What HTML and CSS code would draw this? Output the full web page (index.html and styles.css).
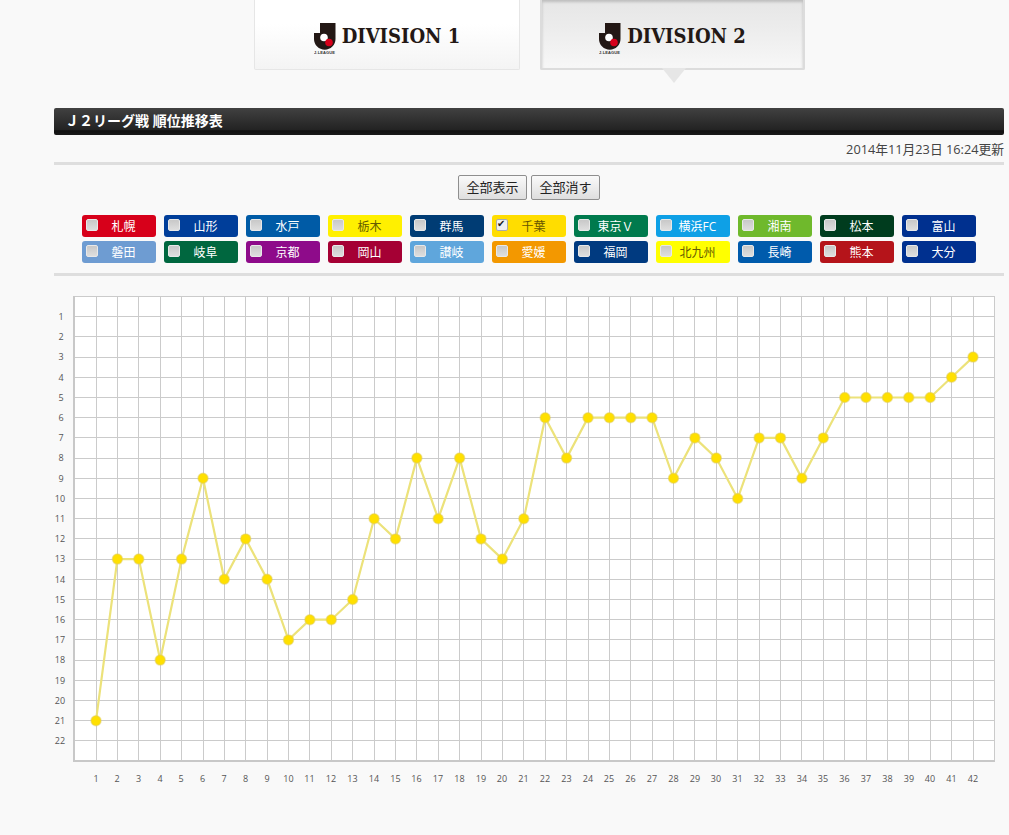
FILE: index.html
```html
<!DOCTYPE html>
<html lang="ja">
<head>
<meta charset="utf-8">
<title>J2リーグ戦 順位推移表</title>
<link rel="stylesheet" href="styles.css">
</head>
<body>
<main class="page">
  <nav class="tabs">
    <a class="tab">
      <svg class="jmark" viewBox="0 0 22 31" aria-hidden="true">
        <path class="jmark-black" d="M6 0H21.500V16A10.750 10.750 0 1 1 0 16V10H6Z"/>
        <circle class="jmark-white" cx="10" cy="14.500" r="3.800"/>
        <circle class="jmark-red" cx="15" cy="19.500" r="3.800"/>
        <text class="jmark-text" x="0" y="30.500" textLength="21">J.LEAGUE</text>
      </svg>
      <span class="division">DIVISION 1</span>
    </a>
    <a class="tab tab-active">
      <svg class="jmark" viewBox="0 0 22 31" aria-hidden="true">
        <path class="jmark-black" d="M6 0H21.500V16A10.750 10.750 0 1 1 0 16V10H6Z"/>
        <circle class="jmark-white" cx="10" cy="14.500" r="3.800"/>
        <circle class="jmark-red" cx="15" cy="19.500" r="3.800"/>
        <text class="jmark-text" x="0" y="30.500" textLength="21">J.LEAGUE</text>
      </svg>
      <span class="division">DIVISION 2</span>
    </a>
  </nav>

  <h1 class="title">Ｊ２リーグ戦 順位推移表</h1>
  <p class="updated">2014年11月23日 16:24更新</p>

  <section class="controls">
    <div class="buttons">
      <button class="btn" type="button">全部表示</button>
      <button class="btn" type="button">全部消す</button>
    </div>
    <div class="chips">
      <label class="chip c-sapporo"><input type="checkbox"><span>札幌</span></label>
      <label class="chip c-yamagata"><input type="checkbox"><span>山形</span></label>
      <label class="chip c-mito"><input type="checkbox"><span>水戸</span></label>
      <label class="chip c-tochigi"><input type="checkbox"><span>栃木</span></label>
      <label class="chip c-gunma"><input type="checkbox"><span>群馬</span></label>
      <label class="chip c-chiba"><input type="checkbox" checked><span>千葉</span></label>
      <label class="chip c-tokyov"><input type="checkbox"><span>東京Ｖ</span></label>
      <label class="chip c-yokohama"><input type="checkbox"><span>横浜FC</span></label>
      <label class="chip c-shonan"><input type="checkbox"><span>湘南</span></label>
      <label class="chip c-matsumoto"><input type="checkbox"><span>松本</span></label>
      <label class="chip c-toyama"><input type="checkbox"><span>富山</span></label>
      <label class="chip c-iwata"><input type="checkbox"><span>磐田</span></label>
      <label class="chip c-gifu"><input type="checkbox"><span>岐阜</span></label>
      <label class="chip c-kyoto"><input type="checkbox"><span>京都</span></label>
      <label class="chip c-okayama"><input type="checkbox"><span>岡山</span></label>
      <label class="chip c-sanuki"><input type="checkbox"><span>讃岐</span></label>
      <label class="chip c-ehime"><input type="checkbox"><span>愛媛</span></label>
      <label class="chip c-fukuoka"><input type="checkbox"><span>福岡</span></label>
      <label class="chip c-kitakyu"><input type="checkbox"><span>北九州</span></label>
      <label class="chip c-nagasaki"><input type="checkbox"><span>長崎</span></label>
      <label class="chip c-kumamoto"><input type="checkbox"><span>熊本</span></label>
      <label class="chip c-oita"><input type="checkbox"><span>大分</span></label>
    </div>
  </section>

  <svg class="chart" viewBox="54 286 950 510" role="img" aria-label="順位推移グラフ">
    <rect class="plot" x="74" y="296" width="920.5" height="465"/>
    <path class="grid" d="M74 316.7H994.5M74 336.9H994.5M74 357.1H994.5M74 377.3H994.5M74 397.5H994.5M74 417.7H994.5M74 437.9H994.5M74 458.1H994.5M74 478.3H994.5M74 498.5H994.5M74 518.7H994.5M74 538.9H994.5M74 559.1H994.5M74 579.3H994.5M74 599.5H994.5M74 619.7H994.5M74 639.9H994.5M74 660.1H994.5M74 680.3H994.5M74 700.5H994.5M74 720.7H994.5M74 740.9H994.5
    M96 296V761M117.4 296V761M138.8 296V761M160.2 296V761M181.6 296V761M203 296V761M224.3 296V761M245.7 296V761M267.1 296V761M288.5 296V761M309.9 296V761M331.3 296V761M352.7 296V761M374.1 296V761M395.5 296V761M416.9 296V761M438.2 296V761M459.6 296V761M481 296V761M502.4 296V761M523.8 296V761M545.2 296V761M566.6 296V761M588 296V761M609.4 296V761M630.8 296V761M652.1 296V761M673.5 296V761M694.9 296V761M716.3 296V761M737.7 296V761M759.1 296V761M780.5 296V761M801.9 296V761M823.3 296V761M844.7 296V761M866 296V761M887.4 296V761M908.8 296V761M930.2 296V761M951.6 296V761M973 296V761M994.5 296V761M74 296H994.5"/>
    <path class="axis" d="M74 296V761H994.5"/>
    <g class="labels">
      <text x="61" y="320">1</text><text x="61" y="340">2</text><text x="61" y="360">3</text><text x="61" y="381">4</text><text x="61" y="401">5</text><text x="61" y="421">6</text><text x="61" y="441">7</text><text x="61" y="461">8</text><text x="61" y="482">9</text><text x="60" y="502">10</text><text x="60" y="522">11</text><text x="60" y="542">12</text><text x="60" y="562">13</text><text x="60" y="583">14</text><text x="60" y="603">15</text><text x="60" y="623">16</text><text x="60" y="643">17</text><text x="60" y="663">18</text><text x="60" y="684">19</text><text x="60" y="704">20</text><text x="60" y="724">21</text><text x="60" y="744">22</text>
    </g>
    <g class="labels">
      <text x="96" y="782">1</text><text x="117" y="782">2</text><text x="138.5" y="782">3</text><text x="160" y="782">4</text><text x="181" y="782">5</text><text x="202.5" y="782">6</text><text x="224" y="782">7</text><text x="245.5" y="782">8</text><text x="267" y="782">9</text><text x="288.5" y="782">10</text><text x="309.5" y="782">11</text><text x="331" y="782">12</text><text x="352.5" y="782">13</text><text x="374" y="782">14</text><text x="395.5" y="782">15</text><text x="416.5" y="782">16</text><text x="438" y="782">17</text><text x="459.5" y="782">18</text><text x="481" y="782">19</text><text x="502" y="782">20</text><text x="523.5" y="782">21</text><text x="545" y="782">22</text><text x="566.5" y="782">23</text><text x="588" y="782">24</text><text x="609" y="782">25</text><text x="630.5" y="782">26</text><text x="652" y="782">27</text><text x="673.5" y="782">28</text><text x="695" y="782">29</text><text x="716" y="782">30</text><text x="737.5" y="782">31</text><text x="759" y="782">32</text><text x="780.5" y="782">33</text><text x="802" y="782">34</text><text x="823" y="782">35</text><text x="844.5" y="782">36</text><text x="866" y="782">37</text><text x="887.5" y="782">38</text><text x="909" y="782">39</text><text x="930" y="782">40</text><text x="951.5" y="782">41</text><text x="973" y="782">42</text>
    </g>
    <polyline class="series" points="96,720.7 117.4,559.1 138.8,559.1 160.2,660.1 181.6,559.1 203,478.3 224.3,579.3 245.7,538.9 267.1,579.3 288.5,639.9 309.9,619.7 331.3,619.7 352.7,599.5 374.1,518.7 395.5,538.9 416.9,458.1 438.2,518.7 459.6,458.1 481,538.9 502.4,559.1 523.8,518.7 545.2,417.7 566.6,458.1 588,417.7 609.4,417.7 630.8,417.7 652.1,417.7 673.5,478.3 694.9,437.9 716.3,458.1 737.7,498.5 759.1,437.9 780.5,437.9 801.9,478.3 823.3,437.9 844.7,397.5 866,397.5 887.4,397.5 908.8,397.5 930.2,397.5 951.6,377.3 973,357.1"/>
    <g class="dots">
      <circle cx="96" cy="720.7" r="5"/><circle cx="117.4" cy="559.1" r="5"/><circle cx="138.8" cy="559.1" r="5"/><circle cx="160.2" cy="660.1" r="5"/><circle cx="181.6" cy="559.1" r="5"/><circle cx="203" cy="478.3" r="5"/><circle cx="224.3" cy="579.3" r="5"/><circle cx="245.7" cy="538.9" r="5"/><circle cx="267.1" cy="579.3" r="5"/><circle cx="288.5" cy="639.9" r="5"/><circle cx="309.9" cy="619.7" r="5"/><circle cx="331.3" cy="619.7" r="5"/><circle cx="352.7" cy="599.5" r="5"/><circle cx="374.1" cy="518.7" r="5"/><circle cx="395.5" cy="538.9" r="5"/><circle cx="416.9" cy="458.1" r="5"/><circle cx="438.2" cy="518.7" r="5"/><circle cx="459.6" cy="458.1" r="5"/><circle cx="481" cy="538.9" r="5"/><circle cx="502.4" cy="559.1" r="5"/><circle cx="523.8" cy="518.7" r="5"/><circle cx="545.2" cy="417.7" r="5"/><circle cx="566.6" cy="458.1" r="5"/><circle cx="588" cy="417.7" r="5"/><circle cx="609.4" cy="417.7" r="5"/><circle cx="630.8" cy="417.7" r="5"/><circle cx="652.1" cy="417.7" r="5"/><circle cx="673.5" cy="478.3" r="5"/><circle cx="694.9" cy="437.9" r="5"/><circle cx="716.3" cy="458.1" r="5"/><circle cx="737.7" cy="498.5" r="5"/><circle cx="759.1" cy="437.9" r="5"/><circle cx="780.5" cy="437.9" r="5"/><circle cx="801.9" cy="478.3" r="5"/><circle cx="823.3" cy="437.9" r="5"/><circle cx="844.7" cy="397.5" r="5"/><circle cx="866" cy="397.5" r="5"/><circle cx="887.4" cy="397.5" r="5"/><circle cx="908.8" cy="397.5" r="5"/><circle cx="930.2" cy="397.5" r="5"/><circle cx="951.6" cy="377.3" r="5"/><circle cx="973" cy="357.1" r="5"/>
    </g>
  </svg>
</main>
</body>
</html>
```

FILE: styles.css
```css
* { box-sizing: border-box; }
html, body { margin: 0; padding: 0; background: #f9f9f9; }
body {
  font-family: "Open Sans", "Noto Sans CJK JP", sans-serif;
  font-size: 12px;
  color: #333;
  overflow: hidden;
}
.page { width: 950px; margin-left: 54px; }

/* tabs */
.tabs { display: flex; gap: 20px; padding-left: 200px; height: 108px; align-items: flex-start; }
.tab {
  position: relative;
  display: flex;
  align-items: flex-start;
  justify-content: center;
  gap: 6px;
  width: 266px;
  height: 70px;
  padding-top: 23px;
  background: linear-gradient(#fff 0, #fff 35%, #f4f4f4 100%);
  border: 1px solid #e6e6e6;
  border-top: 0;
  border-radius: 0 0 2px 2px;
}
.tab-active {
  width: 265px;
  background: linear-gradient(#e6e6e6 0, #ececec 40%, #f7f7f7 100%);
  border: 2px solid #dcdcdc;
  border-top: 0;
  box-shadow: inset 0 2px 3px rgba(0, 0, 0, .18);
}
.tab-active::after {
  content: "";
  position: absolute;
  left: 120px;
  top: 68px;
  border-style: solid;
  border-width: 15px 12px 0;
  border-color: #e6e6e6 transparent transparent;
}
.jmark { width: 22px; height: 31px; flex: none; }
.jmark-black { fill: #231815; }
.jmark-white { fill: #fff; }
.jmark-red { fill: #d7001a; }
.jmark-text { font: bold 4px "Liberation Sans", sans-serif; fill: #333; }
.division {
  font-family: "DejaVu Serif Condensed", "DejaVu Serif", serif;
  font-weight: bold;
  font-size: 20px;
  line-height: 26px;
  color: #231815;
}

/* title */
.title {
  margin: 0;
  height: 27px;
  padding: 3px 0 0 11px;
  font-size: 14px;
  line-height: 19px;
  font-weight: bold;
  color: #fff;
  border-radius: 2px;
  background: linear-gradient(#414141 0, #222 82%, #111 84%, #1a1a1a 100%);
}
.updated {
  margin: 0;
  height: 30px;
  padding-top: 5px;
  text-align: right;
  font-size: 12.75px;
  line-height: 18px;
  color: #444;
  border-bottom: 3px solid #dedede;
}

/* controls */
.controls { height: 111px; padding-top: 10px; border-bottom: 3px solid #dedede; }
.buttons { display: flex; justify-content: center; gap: 4px; }
.btn {
  width: 69px;
  height: 25px;
  padding: 0;
  font: 13px/1 "Open Sans", "Noto Sans CJK JP", sans-serif;
  color: #222;
  border: 1px solid #8f8f8f;
  border-radius: 2px;
  background: linear-gradient(#fafafa, #dedede);
}
.chips {
  display: grid;
  grid-template-columns: repeat(11, 74px);
  gap: 4px 8px;
  margin: 15px 0 0 28px;
}
.chip {
  display: flex;
  align-items: center;
  height: 22px;
  padding-left: 4px;
  border-radius: 3px;
  color: #fff;
  font-size: 12px;
}
.chip span { flex: 1; padding-right: 7px; text-align: center; }
.chip input {
  appearance: none;
  position: relative;
  flex: none;
  width: 12px;
  height: 12px;
  margin: 0 0 2px;
  border: 1px solid #e8e8e8;
  border-radius: 2px;
  background: linear-gradient(#c8c8c8, #dedede);
}
.chip input:checked { background: #f0f0f0; border-color: #aaa; }
.chip input:checked::after {
  content: "✔";
  position: absolute;
  left: 0;
  top: -2px;
  font: 10px/12px "DejaVu Sans", sans-serif;
  color: #222;
}
.c-sapporo { background: #d7001a; }
.c-yamagata { background: #003e9a; }
.c-mito { background: #005ba6; }
.c-tochigi { background: #fff000; color: #665c00; }
.c-gunma { background: #003c74; }
.c-chiba { background: #ffdd00; color: #665500; }
.c-tokyov { background: #007a4d; }
.c-yokohama { background: #0ea0e6; }
.c-shonan { background: #6fb92c; }
.c-matsumoto { background: #003c1e; }
.c-toyama { background: #00308f; }
.c-iwata { background: #6e9cd2; }
.c-gifu { background: #00673f; }
.c-kyoto { background: #8e0b8a; }
.c-okayama { background: #a50034; }
.c-sanuki { background: #5fa6dc; }
.c-ehime { background: #f39800; }
.c-fukuoka { background: #003a80; }
.c-kitakyu { background: #ffff00; color: #665c00; }
.c-nagasaki { background: #005bac; }
.c-kumamoto { background: #b5141a; }
.c-oita { background: #00308f; }

/* chart */
.chart { display: block; width: 950px; height: 510px; margin-top: 10px; }
.plot { fill: #fff; }
.grid { fill: none; stroke: #cbcbcb; stroke-width: 1; shape-rendering: crispEdges; }
.axis { fill: none; stroke: #c8c8c8; stroke-width: 2; shape-rendering: crispEdges; }
.labels text { font: 9px "Open Sans", sans-serif; fill: #555; text-anchor: middle; }
.series { fill: none; stroke: #ece27a; stroke-width: 2.2; }
.dots circle { fill: #ffe000; stroke: rgba(225, 205, 90, .5); stroke-width: 1.5; }
```
